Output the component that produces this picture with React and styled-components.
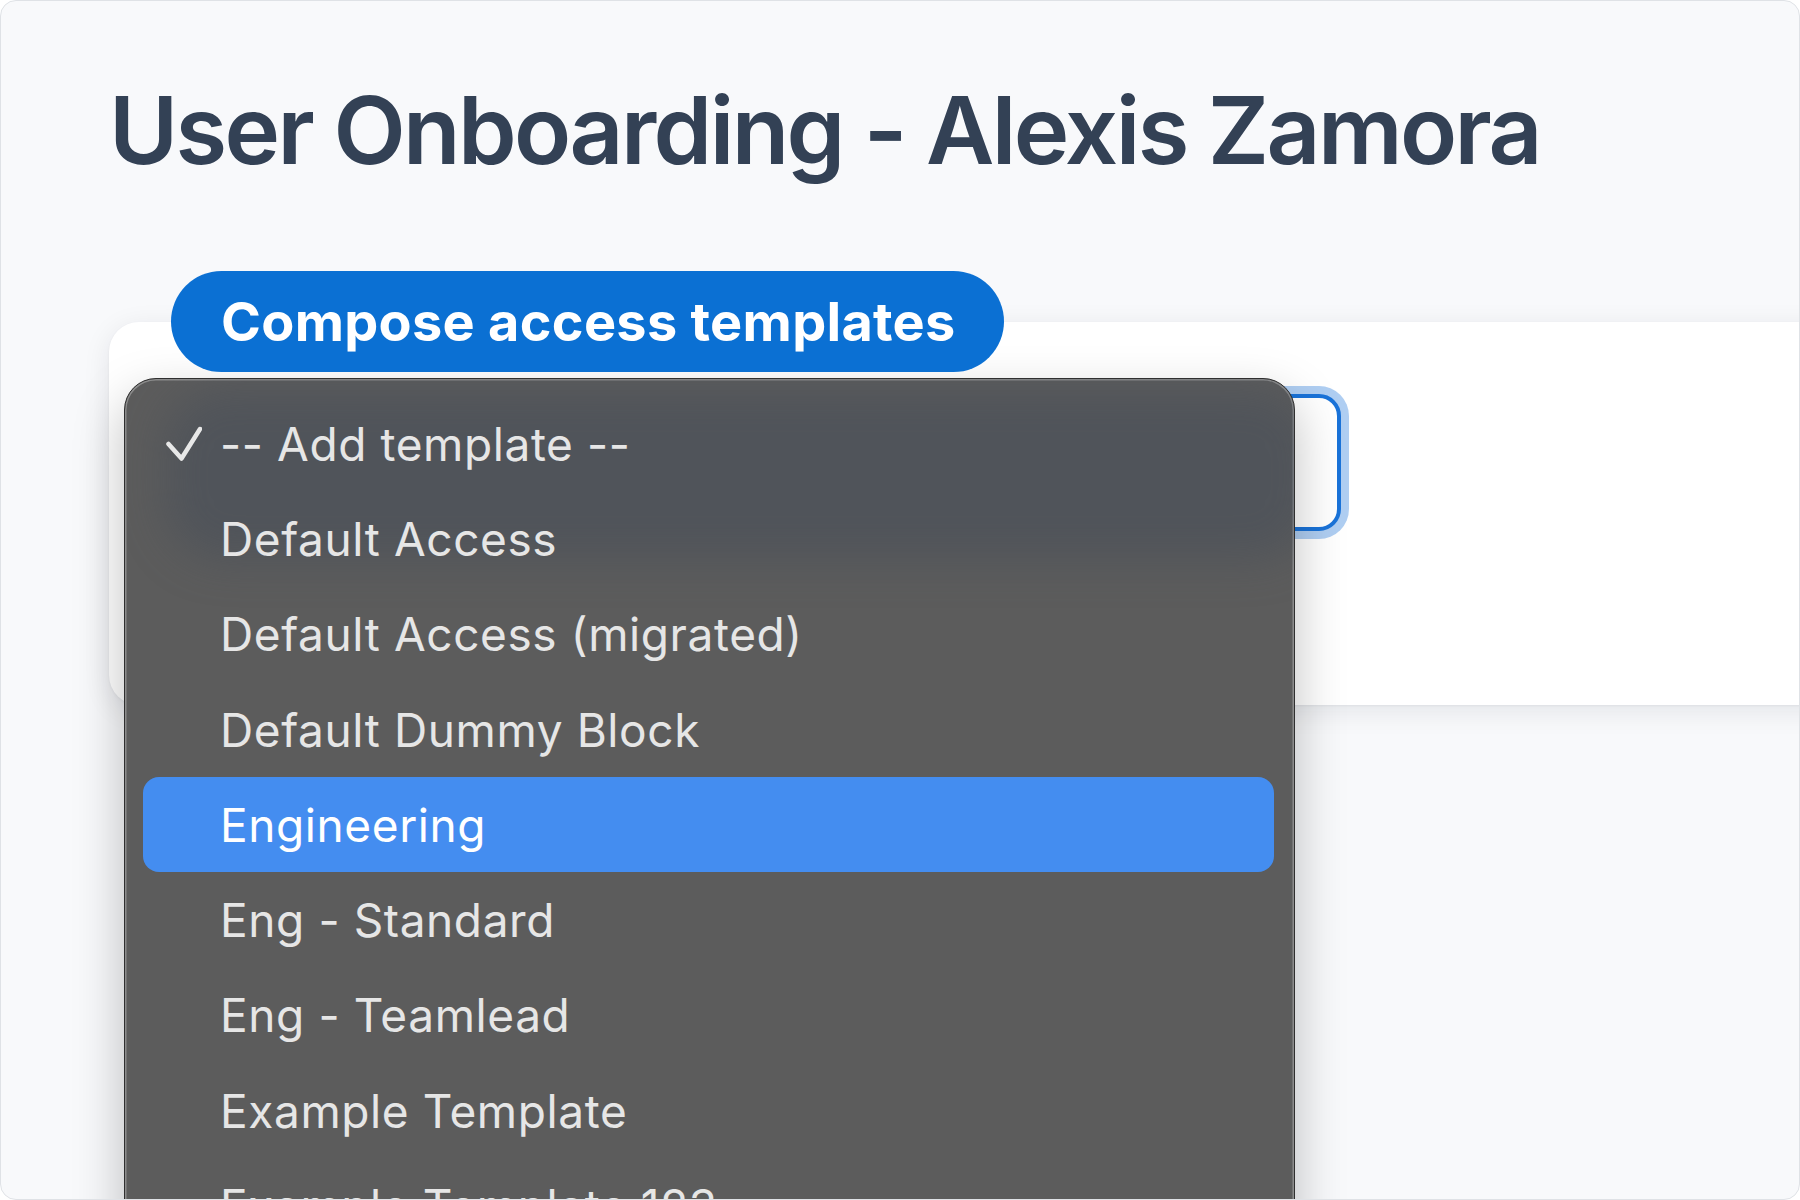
import styled, { createGlobalStyle } from "styled-components";

const GlobalStyle = createGlobalStyle`
  html, body {
    margin: 0;
    background: #ffffff;
  }
  * {
    box-sizing: border-box;
  }
`;

const Frame = styled.div`
  position: relative;
  width: 1800px;
  height: 1200px;
  padding: 72px 0 0 108px;
  background: #f8f9fb;
  border: 1px solid #dfe2e6;
  border-radius: 16px;
  overflow: hidden;
  font-family: Inter, "Noto Sans", sans-serif;
`;

const Title = styled.h1`
  margin: 0;
  font-size: 94px;
  line-height: 114px;
  font-weight: 600;
  letter-spacing: -2.6px;
  color: #334155;
`;

const Section = styled.section`
  display: flex;
  flex-direction: column;
  align-items: flex-start;
  margin-top: 84px;
`;

const Legend = styled.div`
  position: relative;
  z-index: 1;
  margin: 0 0 -50px 62px;
  height: 101px;
  padding: 0 48px 0 50px;
  display: flex;
  align-items: center;
  border-radius: 51px;
  background: #0b70d3;
  color: #ffffff;
  font-size: 54px;
  font-weight: 700;
  letter-spacing: 0.3px;
`;

const Card = styled.div`
  width: 1760px;
  height: 383px;
  padding: 72px 0 0 40px;
  background: #ffffff;
  border-radius: 30px;
  box-shadow: 0 6px 28px rgba(15, 23, 42, 0.09), 0 1px 3px rgba(15, 23, 42, 0.05);
`;

const SelectBox = styled.div`
  width: 1192px;
  height: 137px;
  border: 4px solid #1a73d9;
  border-radius: 22px;
  background: #ffffff;
  box-shadow: 0 0 0 8px rgba(26, 115, 217, 0.35);
`;

const Menu = styled.div`
  position: absolute;
  left: 123px;
  top: 377px;
  width: 1171px;
  bottom: -60px;
  padding-top: 17px;
  background: #5c5c5c;
  border: 1px solid #2f2f2f;
  border-radius: 32px;
  box-shadow: inset 0 0 0 1.5px #8c8c8c, 0 20px 50px rgba(0, 0, 0, 0.25);
  overflow: hidden;

  &::before {
    content: "";
    position: absolute;
    left: 40px;
    right: -20px;
    top: 10px;
    height: 170px;
    border-radius: 60px;
    background: rgba(62, 72, 88, 0.4);
    filter: blur(22px);
  }
`;

const Option = styled.div`
  position: relative;
  display: flex;
  align-items: center;
  height: 95.3px;
  margin: 0 20px 0 18px;
  padding-left: 23px;
  border-radius: 16px;
  background: ${({ $active }) => ($active ? "#448df0" : "transparent")};
  color: ${({ $active }) => ($active ? "#ffffff" : "#e6e6e6")};
  font-size: 46px;
  font-weight: 400;
  letter-spacing: 0.6px;
  white-space: nowrap;
`;

const CheckSlot = styled.span`
  display: flex;
  align-items: center;
  width: 54px;
  flex-shrink: 0;
`;

const options = [
  "-- Add template --",
  "Default Access",
  "Default Access (migrated)",
  "Default Dummy Block",
  "Engineering",
  "Eng - Standard",
  "Eng - Teamlead",
  "Example Template",
  "Example Template 123",
];

function Check() {
  return (
    <svg width="36" height="36" viewBox="0 0 36 36">
      <polyline
        points="2.5,18 15.5,32.5 34,3"
        fill="none"
        stroke="#e8e8e8"
        strokeWidth="4.5"
        strokeLinecap="round"
        strokeLinejoin="round"
      />
    </svg>
  );
}

export default function App() {
  return (
    <>
      <GlobalStyle />
      <Frame>
        <Title>User Onboarding - Alexis Zamora</Title>
        <Section>
          <Legend>Compose access templates</Legend>
          <Card>
            <SelectBox />
          </Card>
        </Section>
        <Menu>
          {options.map((label, i) => (
            <Option key={label} $active={label === "Engineering"}>
              <CheckSlot>{i === 0 && <Check />}</CheckSlot>
              {label}
            </Option>
          ))}
        </Menu>
      </Frame>
    </>
  );
}
